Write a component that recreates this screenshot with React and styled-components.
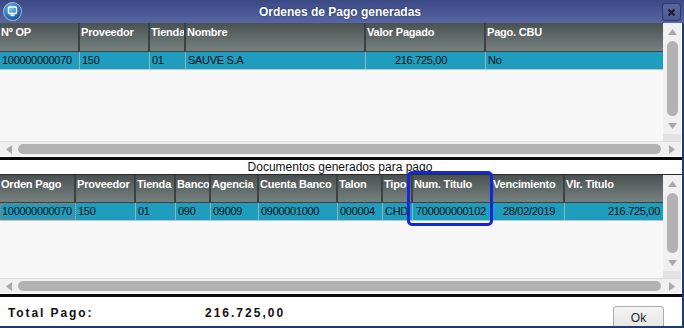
import React from "react";
import styled, { createGlobalStyle } from "styled-components";

const GlobalStyle = createGlobalStyle`
  html, body {
    margin: 0;
    padding: 0;
    background: #ffffff;
  }
  body {
    font-family: "Liberation Sans", Arial, sans-serif;
  }
`;

const topCols = [
  { title: "Nº OP", w: 80, value: "100000000070" },
  { title: "Proveedor", w: 70, value: "150" },
  { title: "Tienda", w: 36, value: "01" },
  { title: "Nombre", w: 180, value: "SAUVE S.A" },
  { title: "Valor Pagado", w: 120, value: "216.725,00", align: "right", pr: 38 },
  { title: "Pago. CBU", w: 177, value: "No" },
];

const bottomCols = [
  { title: "Orden Pago", w: 76, value: "100000000070", focus: true },
  { title: "Proveedor", w: 60, value: "150" },
  { title: "Tienda", w: 40, value: "01" },
  { title: "Banco", w: 35, value: "090" },
  { title: "Agencia", w: 48, value: "09009" },
  { title: "Cuenta Banco", w: 79, value: "0900001000" },
  { title: "Talon", w: 45, value: "000004" },
  { title: "Tipo", w: 30, value: "CHD" },
  { title: "Num. Titulo", w: 79, value: "700000000102", pl: 3 },
  { title: "Vencimiento", w: 73, value: "28/02/2019", align: "center" },
  { title: "Vlr. Titulo", w: 98, value: "216.725,00", align: "right", pr: 3 },
];

const Grid = ({ cols, height, headerHeight }) => (
  <GridBlock $h={height}>
    <GridMain>
      <GridBody>
        <HeaderRow $h={headerHeight}>
          {cols.map((c) => (
            <HeaderCell key={c.title} $w={c.w}>
              {c.title}
            </HeaderCell>
          ))}
        </HeaderRow>
        <DataRow>
          {cols.map((c) => (
            <DataCell
              key={c.title}
              $w={c.w}
              $align={c.align}
              $pr={c.pr}
              $pl={c.pl}
              $focus={c.focus}
            >
              {c.value}
            </DataCell>
          ))}
        </DataRow>
      </GridBody>
      <VScroll>
        <ArrowBox>
          <svg width="9" height="6" viewBox="0 0 9 6">
            <path d="M4.5 0 L9 6 L0 6 Z" fill="#a9a9a9" />
          </svg>
        </ArrowBox>
        <VThumb />
        <ArrowBox>
          <svg width="9" height="6" viewBox="0 0 9 6">
            <path d="M0 0 L9 0 L4.5 6 Z" fill="#a9a9a9" />
          </svg>
        </ArrowBox>
        <Corner />
      </VScroll>
    </GridMain>
    <HScroll>
      <HArrow>
        <svg width="6" height="9" viewBox="0 0 6 9">
          <path d="M6 0 L6 9 L0 4.5 Z" fill="#a9a9a9" />
        </svg>
      </HArrow>
      <HThumb />
      <HArrow>
        <svg width="6" height="9" viewBox="0 0 6 9">
          <path d="M0 0 L6 4.5 L0 9 Z" fill="#a9a9a9" />
        </svg>
      </HArrow>
    </HScroll>
  </GridBlock>
);

const App = () => {
  return (
    <>
      <GlobalStyle />
      <Window>
        <TitleBar>
          <AppIcon>
            <svg width="19" height="19" viewBox="0 0 19 19">
              <defs>
                <radialGradient id="ig" cx="0.4" cy="0.35" r="0.7">
                  <stop offset="0" stopColor="#7fc4f2" />
                  <stop offset="0.6" stopColor="#2a78c4" />
                  <stop offset="1" stopColor="#17467e" />
                </radialGradient>
              </defs>
              <circle cx="9.5" cy="9.5" r="9" fill="url(#ig)" stroke="#c9d6ea" strokeWidth="0.8" />
              <rect x="5.5" y="5" width="8" height="6.5" rx="1" fill="none" stroke="#ffffff" strokeWidth="1.3" />
              <rect x="7.5" y="12.5" width="4" height="1.6" fill="#ffffff" />
            </svg>
          </AppIcon>
          <Title>Ordenes de Pago generadas</Title>
          <CloseButton>
            <svg width="9" height="9" viewBox="0 0 9 9">
              <path d="M1.5 1.5 L7.5 7.5 M7.5 1.5 L1.5 7.5" stroke="#1c1c1c" strokeWidth="2" />
            </svg>
          </CloseButton>
        </TitleBar>
        <Body>
          <Grid cols={topCols} height={133} headerHeight={29} />
          <HeavyRule />
          <SectionLabel>Documentos generados para pago</SectionLabel>
          <Grid cols={bottomCols} height={118} headerHeight={28} />
          <HeavyRule />
          <Footer>
            <TotalLabel>Total Pago:</TotalLabel>
            <TotalValue>216.725,00</TotalValue>
            <OkButton>Ok</OkButton>
          </Footer>
        </Body>
        <Highlight />
      </Window>
    </>
  );
};

export default App;

const Window = styled.div`
  position: relative;
  width: 684px;
  height: 328px;
  display: flex;
  flex-direction: column;
  overflow: hidden;
  background: #ffffff;
`;

const TitleBar = styled.div`
  height: 23px;
  flex: none;
  display: flex;
  align-items: center;
  padding: 0 3px 0 3px;
  box-sizing: border-box;
  background: linear-gradient(#3a4984, #5867a4);
`;

const AppIcon = styled.div`
  width: 19px;
  height: 19px;
  display: flex;
`;

const Title = styled.div`
  flex: 1;
  text-align: center;
  color: #ffffff;
  font-size: 12px;
  font-weight: bold;
  text-shadow: 0 0 2px #1e2a55;
  padding-right: 4px;
`;

const CloseButton = styled.div`
  width: 19px;
  height: 18px;
  box-sizing: border-box;
  border: 1px solid #2a386c;
  border-radius: 3px;
  background: linear-gradient(#5665a0, #4d5c98);
  display: flex;
  align-items: center;
  justify-content: center;
  margin-top: 1px;
`;

const Body = styled.div`
  flex: 1;
  display: flex;
  flex-direction: column;
  border-right: 2px solid #1b3d70;
  border-bottom: 2px solid #1b3d70;
  min-height: 0;
`;

const GridBlock = styled.div`
  height: ${(p) => p.$h}px;
  flex: none;
  display: flex;
  flex-direction: column;
  width: 681px;
`;

const GridMain = styled.div`
  flex: 1;
  display: flex;
  min-height: 0;
`;

const GridBody = styled.div`
  width: 663px;
  background: #f7f7f7;
  overflow: hidden;
`;

const HeaderRow = styled.div`
  display: flex;
  height: ${(p) => p.$h}px;
  background: linear-gradient(#4a5251, #76817f);
  border-bottom: 1px solid #3b4140;
  box-sizing: border-box;
`;

const HeaderCell = styled.div`
  width: ${(p) => p.$w}px;
  flex: none;
  box-sizing: border-box;
  border-right: 2px solid #3c4241;
  padding: 2px 0 0 1px;
  color: #ffffff;
  font-size: 11px;
  font-weight: bold;
  letter-spacing: -0.2px;
  line-height: 14px;
  white-space: nowrap;
  overflow: hidden;
  &:last-child {
    border-right: none;
  }
`;

const DataRow = styled.div`
  display: flex;
  height: 17px;
  background: #1f9dbe;
  border-bottom: 1px solid #b9c4c7;
  box-sizing: content-box;
`;

const DataCell = styled.div`
  width: ${(p) => p.$w}px;
  flex: none;
  box-sizing: border-box;
  border-right: 1px solid #8fb2bc;
  padding: 0 ${(p) => p.$pr || 0}px 0 ${(p) => p.$pl || 2}px;
  text-align: ${(p) => p.$align || "left"};
  color: #101010;
  font-size: 11px;
  letter-spacing: -0.3px;
  line-height: 17px;
  white-space: nowrap;
  overflow: hidden;
  outline: ${(p) => (p.$focus ? "1px dotted #c8703e" : "none")};
  outline-offset: -1px;
  &:last-child {
    border-right: none;
  }
`;

const VScroll = styled.div`
  width: 18px;
  flex: none;
  display: flex;
  flex-direction: column;
  align-items: center;
  background: #f0f0f0;
`;

const ArrowBox = styled.div`
  height: 17px;
  flex: none;
  display: flex;
  align-items: center;
  justify-content: center;
`;

const VThumb = styled.div`
  flex: 1;
  width: 11px;
  border-radius: 6px;
  background: #b2b2b2;
  margin: 1px 0;
`;

const Corner = styled.div`
  height: 7px;
  width: 18px;
  flex: none;
  background: #e2e2e2;
`;

const HScroll = styled.div`
  height: 15px;
  flex: none;
  display: flex;
  align-items: center;
  background: #f0f0f0;
  border-top: 1px solid #dcdcdc;
  box-sizing: border-box;
`;

const HArrow = styled.div`
  width: 18px;
  flex: none;
  display: flex;
  align-items: center;
  justify-content: center;
`;

const HThumb = styled.div`
  flex: 1;
  height: 10px;
  border-radius: 6px;
  background: #b2b2b2;
  margin-right: 2px;
`;

const HeavyRule = styled.div`
  height: 3px;
  flex: none;
  margin-top: 1px;
  background: #0a0a0a;
`;

const SectionLabel = styled.div`
  height: 14px;
  flex: none;
  text-align: center;
  font-size: 12px;
  line-height: 15px;
  color: #111111;
  border-bottom: 1px solid #2a2a2a;
  padding-right: 2px;
  overflow: hidden;
`;

const Footer = styled.div`
  flex: 1;
  display: flex;
  align-items: flex-start;
  padding: 9px 18px 0 8px;
  overflow: hidden;
`;

const TotalLabel = styled.div`
  width: 197px;
  flex: none;
  font-size: 12px;
  font-weight: bold;
  letter-spacing: 1.9px;
  line-height: 14px;
  color: #111111;
`;

const TotalValue = styled.div`
  flex: 1;
  font-size: 12px;
  font-weight: bold;
  letter-spacing: 2px;
  line-height: 14px;
  color: #111111;
`;

const OkButton = styled.div`
  width: 51px;
  height: 24px;
  box-sizing: border-box;
  border: 1px solid #adadad;
  border-radius: 3px;
  background: linear-gradient(#f4f4f4, #e4e4e4);
  font-size: 12px;
  color: #222222;
  text-align: center;
  line-height: 22px;
`;

const Highlight = styled.div`
  position: absolute;
  left: 407px;
  top: 171px;
  width: 86px;
  height: 55px;
  box-sizing: border-box;
  border: 3px solid #1429d6;
  border-radius: 5px;
  pointer-events: none;
`;
